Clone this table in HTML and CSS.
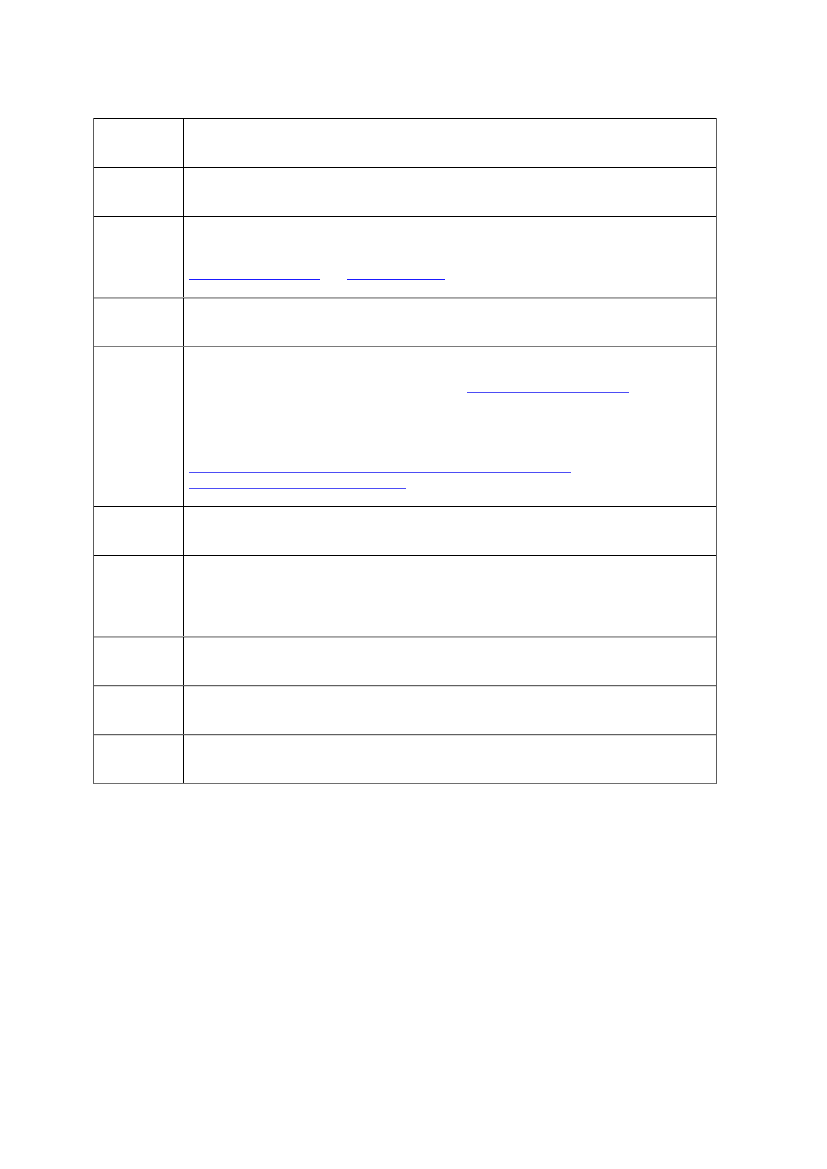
FILE: index.html
```html
<!DOCTYPE html>
<html lang="en">
<head>
<meta charset="utf-8">
<title>Table</title>
<link rel="stylesheet" href="styles.css">
</head>
<body>
<div class="sheet">
  <div class="grid">
    <div class="row t-black"><div class="label"></div><div class="cell h1"></div></div>
    <div class="row t-black"><div class="label"></div><div class="cell h1"></div></div>
    <div class="row t-black">
      <div class="label"></div>
      <div class="cell h3">
        <div class="links-a">
          <a class="ul w131" href="#"></a>
          <a class="ul w98" href="#"></a>
        </div>
      </div>
    </div>
    <div class="row t-light"><div class="label"></div><div class="cell h1"></div></div>
    <div class="row t-mid">
      <div class="label"></div>
      <div class="cell h8">
        <a class="ul w162 l1" href="#"></a>
        <a class="ul w382 l2" href="#"></a>
        <a class="ul w217 l3" href="#"></a>
      </div>
    </div>
    <div class="row t-black"><div class="label"></div><div class="cell h1"></div></div>
    <div class="row t-black"><div class="label"></div><div class="cell h3"></div></div>
    <div class="row t-light"><div class="label"></div><div class="cell h1"></div></div>
    <div class="row t-dark"><div class="label"></div><div class="cell h1"></div></div>
    <div class="row t-dark"><div class="label"></div><div class="cell h1"></div></div>
  </div>
</div>
</body>
</html>
```

FILE: styles.css
```css
html, body {
  margin: 0;
  padding: 0;
  background: #ffffff;
  font-family: "Liberation Sans", Arial, sans-serif;
  font-size: 13px;
}

.sheet {
  padding-top: 118px;
  padding-left: 93px;
}

.grid {
  width: 622px;
  border-left: 1px solid #5a5a5a;
  border-right: 1px solid #5a5a5a;
  border-bottom: 1px solid #6e6e6e;
  box-shadow: 0 1px 0 #d4d4d4;
}

.row {
  display: grid;
  grid-template-columns: 90px 1fr;
  border-top: 1px solid #000000;
}

.t-black { border-top-color: #000000; }
.t-light { border-top-color: #a3a3a3; box-shadow: inset 0 1px 0 #b8b8b8; }
.t-mid { border-top-color: #7a7a7a; }
.t-dark { border-top-color: #606060; box-shadow: inset 0 1px 0 #dcdcdc; }

.label {
  border-right: 1px solid #000000;
}

.cell {
  padding-left: 5px;
  box-sizing: border-box;
}

.h1 { height: 48px; }
.h3 { height: 80px; }
.h8 { height: 159px; }

.links-a {
  display: flex;
  gap: 27px;
  padding-top: 62px;
}

.ul {
  display: block;
  height: 1px;
  background: #1a1aff;
}

.w131 { width: 131px; }
.w98 { width: 98px; }
.w162 { width: 162px; }
.w382 { width: 382px; }
.w217 { width: 217px; }

.l1 { margin-top: 45px; margin-left: 278px; background: #4d4df5; }
.l2 { margin-top: 79px; background: #4d4df5; }
.l3 { margin-top: 15px; background: #4d4df5; }
```
